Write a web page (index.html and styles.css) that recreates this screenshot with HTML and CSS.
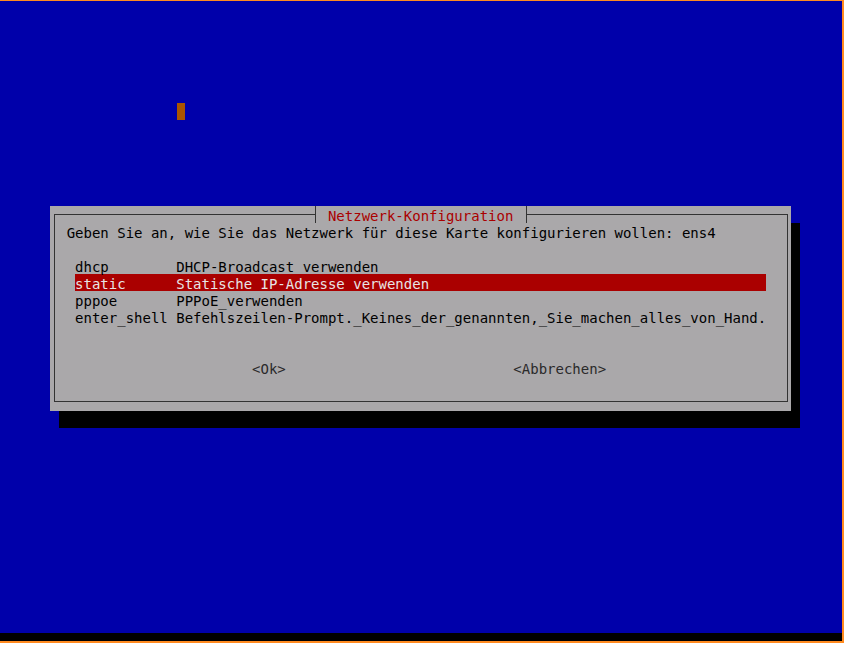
FILE: index.html
```html
<!DOCTYPE html>
<html lang="de">
<head>
    <meta charset="UTF-8">
    <title>Netzwerk-Konfiguration</title>
    <link rel="stylesheet" href="styles.css">
</head>
<body>
    <div class="frame">
        <div class="screen">
            <div class="desk">
                <div class="cursor"></div>

                <div class="dialog">
                    <fieldset class="box">
                        <legend class="title row">Netzwerk-Konfiguration</legend>
                        <div class="body">
                            <p class="prompt row">Geben Sie an, wie Sie das Netzwerk für diese Karte konfigurieren wollen: ens4</p>
                            <ul class="choices">
                                <li class="row"><span class="key">dhcp</span>DHCP-Broadcast verwenden</li>
                                <li class="row active"><span class="key">static</span>Statische IP-Adresse verwenden</li>
                                <li class="row"><span class="key">pppoe</span>PPPoE_verwenden</li>
                                <li class="row"><span class="key">enter_shell</span>Befehlszeilen-Prompt._Keines_der_genannten,_Sie_machen_alles_von_Hand.</li>
                            </ul>
                            <div class="buttons row">
                                <span class="btn">&lt;Ok&gt;</span>
                                <span class="btn cancel">&lt;Abbrechen&gt;</span>
                            </div>
                        </div>
                    </fieldset>
                </div>
            </div>
            <!-- untere Statuszeile -->
            <div class="status"></div>
        </div>
    </div>
</body>
</html>
```

FILE: styles.css
```css
body {
    margin: 0;
    background-color: #fff;
    font-family: "DejaVu Sans Mono", "Liberation Mono", monospace;
    font-size: 14px;
    line-height: 17px;
    color: #000;
}

.frame {
    width: 842px;
    height: 640px;
    border-style: solid;
    border-color: #ff8a1f;
    border-width: 1px 2px 2px 0;
}

.screen {
    height: 100%;
    display: flex;
    flex-direction: column;
    background-color: #0000aa;
}

.desk {
    flex: 1;
    overflow: hidden;
}

.status {
    height: 8px;
    background-color: #000;
}

.cursor {
    width: 8px;
    height: 17px;
    margin: 102px 0 0 177px;
    background-color: #aa5500;
}

.dialog {
    box-sizing: border-box;
    width: 741px;
    height: 205px;
    margin: 86px 0 0 50px;
    padding: 0 3px 9px 4px;
    display: flex;
    flex-direction: column;
    background-color: #aaa8aa;
    box-shadow: 9px 17px 0 #000;
}

.box {
    flex: 1;
    min-width: 0;
    margin: 0;
    padding: 0;
    border: 1px solid #333;
}

/* eine Textzeile der Konsole: 17px hoch, Schrift etwas tiefer gesetzt */
.row {
    padding-top: 4px;
    line-height: 13px;
}

.title {
    margin-left: calc(31ch - 1.5px);
    padding-left: calc(1.5ch - 0.5px);
    padding-right: calc(1.5ch - 0.5px);
    border-left: 1px solid #333;
    border-right: 1px solid #333;
    color: #aa0000;
}

.body {
    padding-left: calc(1.5ch - 1px);
}

.prompt {
    margin: 0 0 17px;
    white-space: pre;
}

.choices {
    list-style: none;
    width: 82ch;
    margin: 0 0 34px 1ch;
    padding: 0;
}

.choices li {
    display: flex;
    white-space: pre;
}

.key {
    width: 12ch;
    flex-shrink: 0;
}

.active {
    background-color: #aa0000;
    color: #e8e4e4;
}

.buttons {
    display: flex;
    margin-left: 22ch;
    white-space: pre;
    color: #2a2a2a;
}

.cancel {
    margin-left: 27ch;
}
```
